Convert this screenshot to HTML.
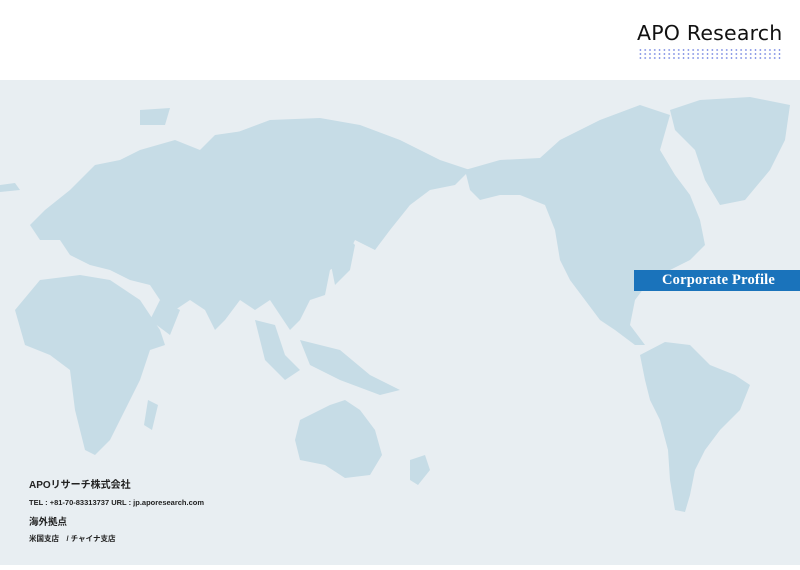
<!DOCTYPE html>
<html><head><meta charset="utf-8"><style>
body{margin:0;width:800px;height:565px;overflow:hidden;background:#fff;font-family:"Liberation Sans","Noto Sans CJK JP",sans-serif;position:relative}
.map{position:absolute;left:0;top:80px;width:800px;height:485px;background:#e8eef2}
.logo{position:absolute;left:637px;top:21px;font-size:20.5px;color:#111;font-family:"DejaVu Sans","Liberation Sans",sans-serif;letter-spacing:0.2px}
.dots{position:absolute;left:638px;top:48px;width:145px;height:11px;background-image:radial-gradient(circle,#6a7de0 0.7px,transparent 0.9px);background-size:4.8px 4px}
.banner{position:absolute;left:634px;top:270px;width:166px;height:21px;background:#1a73bb;color:#fff;font-family:"Liberation Serif",serif;font-size:14.5px;font-weight:bold;line-height:21px;text-indent:28px;letter-spacing:0.2px}
.t{position:absolute;left:29px;color:#222;font-weight:bold}
</style></head><body>
<div class="logo">APO Research</div>
<div class="dots"></div>
<div class="map">
<svg width="800" height="485" viewBox="0 80 800 485" fill="#c6dce6">
<path d="M70 190 L95 165 L120 160 L140 150 L175 140 L200 150 L230 135 L270 120 L320 118 L360 125 L400 140 L440 160 L470 170 L455 185 L430 190 L410 205 L390 230 L375 250 L355 240 L345 260 L330 270 L325 295 L310 300 L300 320 L290 330 L280 315 L270 300 L255 310 L240 300 L225 320 L215 330 L205 310 L190 300 L175 310 L160 300 L150 285 L130 280 L110 270 L90 265 L70 255 L60 240 L40 240 L30 225 L45 210 Z"/>
<path d="M160 300 L180 310 L170 335 L150 320 Z"/>
<path d="M255 320 L275 325 L285 355 L300 370 L285 380 L265 360 Z"/>
<path d="M300 340 L340 350 L370 375 L400 390 L380 395 L340 380 L310 365 Z"/>
<path d="M340 230 L355 245 L350 270 L335 285 L330 260 Z"/>
<path d="M200 150 L215 135 L250 130 L240 150 Z"/>
<path d="M140 110 L170 108 L165 125 L140 125 Z"/>
<path d="M15 310 L40 280 L80 275 L110 280 L140 300 L160 330 L165 345 L150 350 L140 380 L125 410 L110 440 L95 455 L85 450 L75 410 L70 370 L50 355 L25 345 Z"/>
<path d="M148 400 L158 405 L152 430 L144 425 Z"/>
<path d="M0 185 L15 183 L20 190 L0 192 Z"/>
<path d="M300 420 L330 405 L345 400 L360 410 L375 430 L382 455 L370 475 L345 478 L325 465 L300 460 L295 440 Z"/>
<path d="M410 460 L425 455 L430 470 L418 485 L410 480 Z"/>
<path d="M465 170 L500 160 L540 158 L560 140 L600 120 L640 105 L670 115 L660 150 L675 175 L690 195 L700 220 L705 245 L690 260 L670 270 L650 280 L635 300 L630 325 L645 345 L635 345 L615 330 L600 320 L585 300 L570 280 L560 260 L555 230 L545 205 L520 195 L500 195 L480 200 L470 190 Z"/>
<path d="M670 110 L700 100 L750 97 L790 105 L785 140 L770 170 L745 200 L720 205 L705 180 L695 150 L675 130 Z"/>
<path d="M640 355 L665 342 L690 345 L710 365 L735 375 L750 385 L740 410 L720 430 L705 450 L695 470 L690 495 L685 512 L675 510 L670 480 L668 450 L660 420 L650 400 L645 380 Z"/>
</svg>
</div>
<div class="banner">Corporate Profile</div>
<div class="t" style="top:476px;font-size:10px">APOリサーチ株式会社</div>
<div class="t" style="top:498px;font-size:7.5px">TEL : +81-70-83313737 URL : jp.aporesearch.com</div>
<div class="t" style="top:514px;font-size:9.5px">海外拠点</div>
<div class="t" style="top:533px;font-size:7.5px">米国支店　/ チャイナ支店</div>
</body></html>
